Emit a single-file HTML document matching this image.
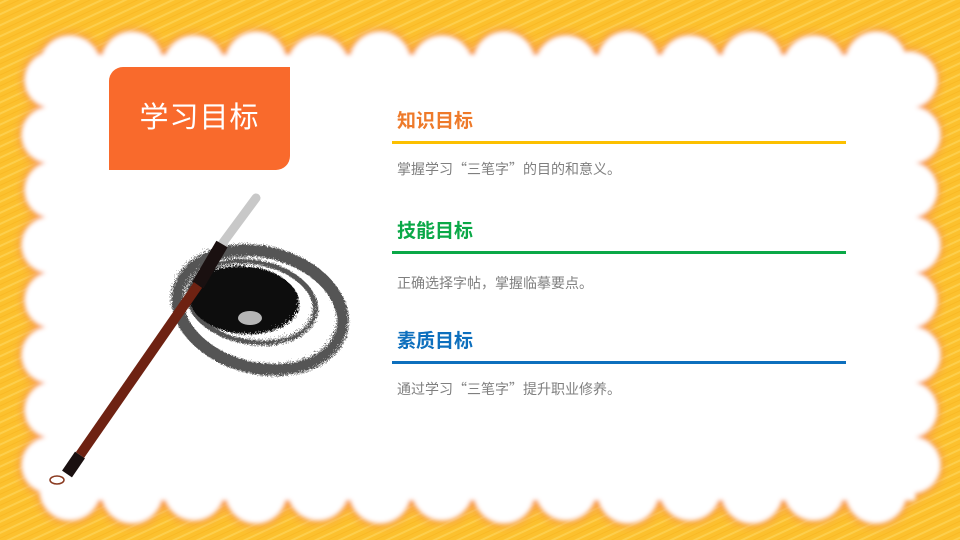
<!DOCTYPE html>
<html><head><meta charset="utf-8"><style>
*{margin:0;padding:0}
body{width:960px;height:540px;overflow:hidden;position:relative;font-family:"Liberation Sans","Noto Sans CJK SC",sans-serif;background:#fcc12e}
svg{position:absolute;left:0;top:0}
.box{position:absolute;left:109px;top:67px;width:181px;height:103px;background:#f96a2c;border-radius:14px 0 14px 0;color:#fff;font-size:29px;line-height:103px;text-align:center;letter-spacing:1px}
.t{position:absolute;left:397px;font-size:19px;font-weight:bold}
.ln{position:absolute;left:392px;width:454px;height:3px}
.p{position:absolute;left:397px;font-size:14px;color:#7f7f7f;font-family:"Noto Sans CJK SC",sans-serif}
</style></head><body>
<svg width="960" height="540">
<defs>
<pattern id="st" width="10" height="10" patternUnits="userSpaceOnUse" patternTransform="rotate(-25)"><rect width="10" height="10" fill="#fcc12e"/><line x1="0" y1="3" x2="10" y2="3" stroke="#fdcf4c" stroke-width="2"/><line x1="0" y1="8" x2="10" y2="8" stroke="#f9b925" stroke-width="1"/></pattern>
<filter id="gl" x="-10%" y="-10%" width="120%" height="120%"><feGaussianBlur in="SourceAlpha" stdDeviation="3" result="b0"/><feMorphology in="SourceAlpha" operator="dilate" radius="2" result="d"/><feGaussianBlur in="d" stdDeviation="5" result="b"/><feFlood flood-color="#f79a55"/><feComposite in2="b" operator="in" result="s"/><feGaussianBlur in="SourceGraphic" stdDeviation="2" result="w"/><feMerge><feMergeNode in="s"/><feMergeNode in="w"/></feMerge></filter>
<filter id="rough"><feTurbulence baseFrequency="0.9" numOctaves="2" result="n"/><feDisplacementMap in="SourceGraphic" in2="n" scale="8"/></filter>
</defs>
<rect width="960" height="540" fill="url(#st)"/>
<g id="cl" filter="url(#gl)" fill="#fff"><rect x="45" y="55" width="870" height="445"/></g>
<g filter="url(#rough)">
<ellipse cx="258" cy="308" rx="84" ry="58" transform="rotate(14 258 308)" fill="none" stroke="#555" stroke-width="12"/>
<ellipse cx="250" cy="300" rx="64" ry="40" transform="rotate(10 250 300)" fill="none" stroke="#555" stroke-width="5"/>
<ellipse cx="242" cy="298" rx="55" ry="34" transform="rotate(5 242 298)" fill="#111"/>
</g>
<ellipse cx="250" cy="318" rx="12" ry="7" fill="#fff" opacity=".7"/>
<line x1="256" y1="198" x2="222" y2="244" stroke="#c8c8c8" stroke-width="9" stroke-linecap="round"/>
<line x1="222" y1="244" x2="198" y2="285" stroke="#1a1010" stroke-width="13"/>
<line x1="198" y1="285" x2="80" y2="455" stroke="#6e2212" stroke-width="10"/>
<line x1="80" y1="455" x2="67" y2="474" stroke="#1a1010" stroke-width="12"/>
<ellipse cx="57" cy="480" rx="7" ry="4" fill="none" stroke="#8a3a20" stroke-width="1.5"/>
</svg>
<script>
var g=document.getElementById('cl'),ns='http://www.w3.org/2000/svg';
function c(x,y,r){var e=document.createElementNS(ns,'circle');e.setAttribute('cx',x);e.setAttribute('cy',y);e.setAttribute('r',r);g.appendChild(e);}
var i=0;
for(var x=70;x<=900;x+=62){i++;c(x,62+(i%2?4:0),30);c(x,493-(i%2?3:0),30);}
for(var y=80;y<=480;y+=55){i++;c(50+(i%2?3:0),y,28);c(912-(i%2?3:0),y,28);}
</script>
<div class="box">学习目标</div>
<div class="t" style="top:106px;color:#ee7a2a">知识目标</div>
<div class="ln" style="top:141px;background:#fcc000"></div>
<div class="p" style="top:159px">掌握学习“三笔字”的目的和意义。</div>
<div class="t" style="top:216px;color:#0aa847">技能目标</div>
<div class="ln" style="top:251px;background:#0aa847"></div>
<div class="p" style="top:273px">正确选择字帖，掌握临摹要点。</div>
<div class="t" style="top:326px;color:#0d6fbd">素质目标</div>
<div class="ln" style="top:361px;background:#0d6fbd"></div>
<div class="p" style="top:379px">通过学习“三笔字”提升职业修养。</div>
</body></html>
